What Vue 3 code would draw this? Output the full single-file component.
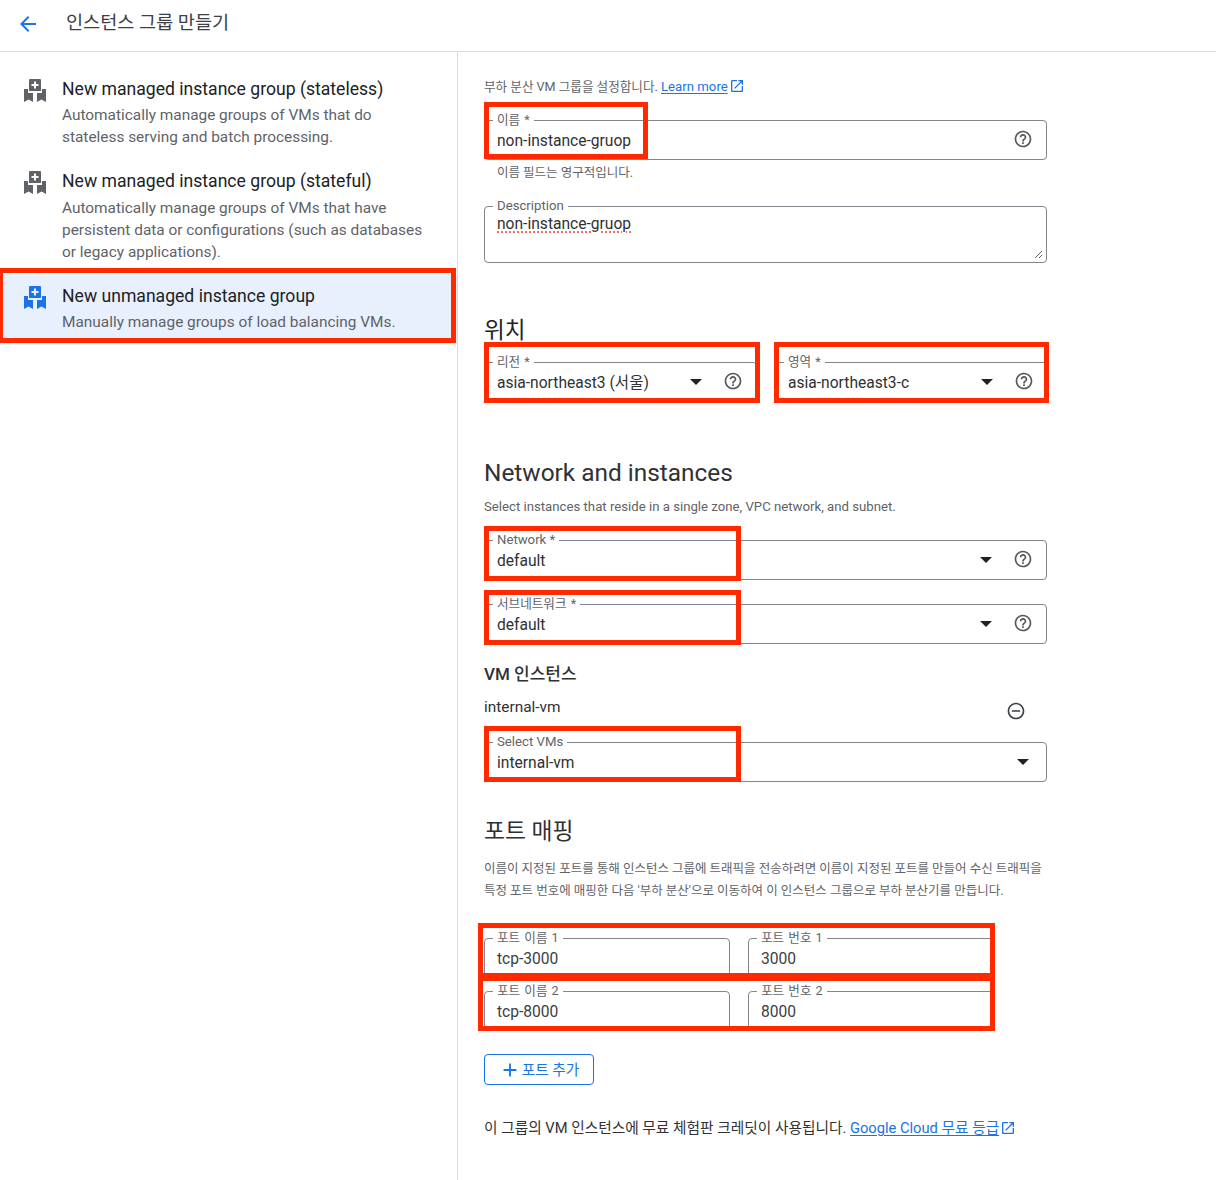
<template>
  <div class="page">
    <header class="topbar">
      <svg class="back" viewBox="0 0 24 24" width="24" height="24"><path d="M20 11H7.830l5.590-5.590L12 4l-8 8 8 8 1.410-1.410L7.830 13H20v-2z" /></svg>
      <h1>인스턴스 그룹 만들기</h1>
    </header>

    <div class="body">
      <nav class="sidebar">
        <div v-for="item in groupTypes" :key="item.title" class="type-item" :class="{ selected: item.selected }">
          <svg class="type-icon" viewBox="0 0 24 24" width="24" height="24">
            <path fill-rule="evenodd" d="M7 1h10a1 1 0 0 1 1 1v11H6V2a1 1 0 0 1 1-1zm4 2.500V6H8.500v2H11v2.500h2V8h2.500V6H13V3.500z" />
            <path d="M1 11h4v4h5v9l-4.500-2.500L1 24zM14 15h5v-4h4v13l-4.500-2.500L14 24z" />
          </svg>
          <div>
            <div class="type-title">{{ item.title }}</div>
            <div class="type-desc" v-html="item.desc"></div>
          </div>
        </div>
      </nav>

      <main class="form">
        <p class="intro">
          부하 분산 VM 그룹을 설정합니다.
          <a class="link">Learn more</a>
          <svg class="ext" viewBox="0 0 24 24" width="16" height="16"><path :d="extPath" /></svg>
        </p>

        <div class="field name-field">
          <label class="ko">이름 *</label>
          <span class="value">non-instance-gruop</span>
          <svg class="help" viewBox="0 0 24 24" width="20" height="20"><path :d="helpPath" /></svg>
        </div>
        <div class="hint">이름 필드는 영구적입니다.</div>

        <div class="field desc-field">
          <label>Description</label>
          <span class="value spell">non-instance-gruop</span>
          <svg class="grip" viewBox="0 0 10 10" width="10" height="10">
            <path d="M2 9L9 2M6 9L9 6" stroke="#5f6368" stroke-width="1" fill="none" />
          </svg>
        </div>

        <h2 class="loc-title">위치</h2>
        <div class="loc-row">
          <div class="field">
            <label class="ko">리전 *</label>
            <span class="value">asia-northeast3 (서울)</span>
            <svg class="drop" viewBox="0 0 12 6" width="12" height="6"><path d="M0 0h12L6 6z" /></svg>
            <svg class="help" viewBox="0 0 24 24" width="20" height="20"><path :d="helpPath" /></svg>
          </div>
          <div class="field">
            <label class="ko">영역 *</label>
            <span class="value">asia-northeast3-c</span>
            <svg class="drop" viewBox="0 0 12 6" width="12" height="6"><path d="M0 0h12L6 6z" /></svg>
            <svg class="help" viewBox="0 0 24 24" width="20" height="20"><path :d="helpPath" /></svg>
          </div>
        </div>

        <h2 class="net-title">Network and instances</h2>
        <p class="net-sub">Select instances that reside in a single zone, VPC network, and subnet.</p>
        <div class="field network">
          <label>Network *</label>
          <span class="value">default</span>
          <svg class="drop" viewBox="0 0 12 6" width="12" height="6"><path d="M0 0h12L6 6z" /></svg>
          <svg class="help" viewBox="0 0 24 24" width="20" height="20"><path :d="helpPath" /></svg>
        </div>
        <div class="field network">
          <label class="ko">서브네트워크 *</label>
          <span class="value">default</span>
          <svg class="drop" viewBox="0 0 12 6" width="12" height="6"><path d="M0 0h12L6 6z" /></svg>
          <svg class="help" viewBox="0 0 24 24" width="20" height="20"><path :d="helpPath" /></svg>
        </div>

        <h3>VM 인스턴스</h3>
        <div class="vm-row">
          <span>internal-vm</span>
          <svg class="minus" viewBox="0 0 24 24" width="20" height="20"><path d="M7 11v2h10v-2H7zm5-9C6.480 2 2 6.480 2 12s4.480 10 10 10 10-4.480 10-10S17.520 2 12 2zm0 18c-4.410 0-8-3.590-8-8s3.590-8 8-8 8 3.590 8 8-3.590 8-8 8z" /></svg>
        </div>
        <div class="field vm-select">
          <label>Select VMs</label>
          <span class="value">internal-vm</span>
          <svg class="drop" viewBox="0 0 12 6" width="12" height="6"><path d="M0 0h12L6 6z" /></svg>
        </div>

        <h2 class="port-title">포트 매핑</h2>
        <p class="port-desc">
          이름이 지정된 포트를 통해 인스턴스 그룹에 트래픽을 전송하려면 이름이 지정된 포트를 만들어 수신 트래픽을<br />
          특정 포트 번호에 매핑한 다음 '부하 분산'으로 이동하여 이 인스턴스 그룹으로 부하 분산기를 만듭니다.
        </p>
        <div class="ports">
          <template v-for="port in ports" :key="port.name">
            <div class="field">
              <label class="ko">{{ port.nameLabel }}</label>
              <span class="value">{{ port.name }}</span>
            </div>
            <div class="field">
              <label class="ko">{{ port.numLabel }}</label>
              <span class="value">{{ port.num }}</span>
            </div>
          </template>
        </div>

        <button class="add-port">
          <svg viewBox="0 0 24 24" width="22" height="22"><path d="M19 13h-6v6h-2v-6H5v-2h6V5h2v6h6v2z" /></svg>
          <span>포트 추가</span>
        </button>

        <p class="credit">
          이 그룹의 VM 인스턴스에 무료 체험판 크레딧이 사용됩니다.
          <a class="link">Google Cloud 무료 등급</a>
          <svg class="ext" viewBox="0 0 24 24" width="16" height="16"><path :d="extPath" /></svg>
        </p>
      </main>
    </div>

    <!-- red annotation boxes drawn on top of the screenshot -->
    <div
      v-for="(box, i) in marks"
      :key="i"
      class="mark"
      :style="{ left: box[0] + 'px', top: box[1] + 'px', width: box[2] + 'px', height: box[3] + 'px' }"
    ></div>
  </div>
</template>

<script setup>
const helpPath =
  "M11 18h2v-2h-2v2zm1-16C6.480 2 2 6.480 2 12s4.480 10 10 10 10-4.480 10-10S17.520 2 12 2zm0 18c-4.410 0-8-3.590-8-8s3.590-8 8-8 8 3.590 8 8-3.590 8-8 8zm0-14c-2.210 0-4 1.790-4 4h2c0-1.100.9-2 2-2s2 .9 2 2c0 2-3 1.750-3 5h2c0-2.250 3-2.500 3-5 0-2.210-1.790-4-4-4z";
const extPath =
  "M19 19H5V5h7V3H5c-1.110 0-2 .9-2 2v14c0 1.100.89 2 2 2h14c1.100 0 2-.9 2-2v-7h-2v7zM14 3v2h3.590l-9.830 9.830 1.410 1.410L19 6.410V10h2V3h-7z";

const groupTypes = [
  {
    title: "New managed instance group (stateless)",
    desc: "Automatically manage groups of VMs that do<br>stateless serving and batch processing.",
  },
  {
    title: "New managed instance group (stateful)",
    desc: "Automatically manage groups of VMs that have<br>persistent data or configurations (such as databases<br>or legacy applications).",
  },
  {
    title: "New unmanaged instance group",
    desc: "Manually manage groups of load balancing VMs.",
    selected: true,
  },
];

const ports = [
  { nameLabel: "포트 이름 1", name: "tcp-3000", numLabel: "포트 번호 1", num: "3000" },
  { nameLabel: "포트 이름 2", name: "tcp-8000", numLabel: "포트 번호 2", num: "8000" },
];

const marks = [
  [-2, 268, 458, 75],
  [484, 102, 164, 57],
  [484, 342, 276, 61],
  [774, 342, 275, 61],
  [484, 526, 257, 55],
  [484, 590, 257, 55],
  [484, 726, 257, 56],
  [478, 923, 517, 55],
  [478, 976, 517, 55],
];
</script>

<style>
html,
body {
  margin: 0;
  background: #fff;
}
</style>

<style scoped>
.page {
  position: relative;
  width: 1216px;
  height: 1180px;
  overflow: hidden;
  font-family: Roboto, "Noto Sans CJK KR", sans-serif;
  color: #202124;
}
.topbar {
  height: 51px;
  border-bottom: 1px solid #dadce0;
  display: flex;
  align-items: flex-start;
}
.back {
  fill: #1a73e8;
  margin: 12px 0 0 16px;
}
.topbar h1 {
  margin: 10px 0 0 26px;
  font-size: 18.600px;
  line-height: 26px;
  font-weight: 400;
  color: #3c4043;
}
.body {
  display: flex;
  height: 1128px;
}
.sidebar {
  width: 458px;
  box-sizing: border-box;
  border-right: 1px solid #dadce0;
  padding-top: 16px;
  flex-shrink: 0;
}
.type-item {
  display: flex;
  gap: 15px;
  padding: 9px 0 9px 23px;
  margin-bottom: 3px;
}
.type-icon {
  fill: #5f6368;
  flex-shrink: 0;
  margin-top: 1px;
}
.type-title {
  font-size: 17.600px;
  line-height: 24px;
  color: #202124;
}
.type-desc {
  margin-top: 3px;
  font-size: 15.400px;
  line-height: 22px;
  color: #5f6368;
}
.type-item:nth-child(2) .type-desc {
  margin-top: 4px;
}
.selected {
  background: #e8f0fe;
  margin-bottom: 0;
  padding-bottom: 11px;
}
.selected .type-icon {
  fill: #1a73e8;
}
.form {
  width: 563px;
  margin-left: 26px;
  padding-top: 25px;
}
p {
  margin: 0;
}
.intro {
  font-size: 12.600px;
  line-height: 20px;
  color: #5f6368;
}
.link {
  color: #1a73e8;
  text-decoration: underline;
  text-underline-offset: 2px;
}
.intro .link {
  font-size: 13.200px;
}
.ext {
  fill: #1a73e8;
  vertical-align: -3px;
  margin-left: 1px;
}
.field {
  position: relative;
  box-sizing: border-box;
  height: 40px;
  border: 1px solid #80868b;
  border-radius: 4px;
  background: #fff;
  display: flex;
  align-items: center;
  padding: 1px 12px 0;
}
.field label {
  position: absolute;
  left: 8px;
  top: -9px;
  padding: 0 4px;
  background: #fff;
  font-size: 13.200px;
  line-height: 16px;
  color: #5f6368;
}
.field label.ko {
  font-size: 12.600px;
  word-spacing: 1px;
}
.value {
  font-size: 15.600px;
  line-height: 20px;
  color: #303134;
}
.help {
  fill: #54585c;
  position: absolute;
  right: 13px;
  top: 8px;
}
.drop {
  fill: #202124;
  position: absolute;
  right: 54px;
  top: 16px;
}
.name-field {
  margin-top: 23px;
}
.hint {
  margin: 5px 0 0 13px;
  font-size: 12.500px;
  line-height: 16px;
  color: #5f6368;
}
.desc-field {
  margin-top: 25px;
  height: 57px;
  align-items: flex-start;
  padding-top: 7px;
}
.spell {
  text-decoration: underline dotted #ea4335;
  text-underline-offset: 3px;
}
.grip {
  position: absolute;
  right: 3px;
  bottom: 3px;
}
h2 {
  margin: 0;
  font-weight: 400;
  color: #202124;
}
.loc-title {
  margin-top: 51px;
  font-size: 22.500px;
  line-height: 32px;
}
.loc-row {
  margin-top: 16px;
  display: grid;
  grid-template-columns: 273px 273px;
  gap: 18px;
}
.net-title {
  margin-top: 55px;
  font-size: 24.400px;
  line-height: 32px;
  color: #303134;
}
.net-sub {
  margin-top: 8px;
  font-size: 13.200px;
  line-height: 20px;
  color: #5f6368;
}
.network {
  margin-top: 24px;
}
.net-sub + .network {
  margin-top: 23px;
}
h3 {
  margin: 18px 0 0;
  font-size: 17px;
  line-height: 24px;
  font-weight: 500;
  color: #303134;
}
.vm-row {
  margin-top: 11px;
  display: flex;
  justify-content: space-between;
  font-size: 15.400px;
  line-height: 20px;
  color: #303134;
}
.minus {
  fill: #3c4043;
  margin: 4px 21px -4px 0;
}
.vm-select {
  margin-top: 25px;
}
.vm-select .drop {
  right: 17px;
}
.port-title {
  margin-top: 34px;
  font-size: 22.800px;
  line-height: 32px;
  color: #303134;
}
.port-desc {
  margin-top: 10px;
  font-size: 12.500px;
  line-height: 22px;
  color: #5f6368;
}
.ports {
  margin-top: 36px;
  display: grid;
  grid-template-columns: 246px 246px;
  column-gap: 18px;
  row-gap: 13px;
}
.ports .value {
  color: #3c4043;
}
.add-port {
  margin-top: 23px;
  box-sizing: border-box;
  width: 110px;
  height: 31px;
  display: flex;
  align-items: center;
  justify-content: center;
  gap: 1px;
  background: #fff;
  border: 1px solid #1a73e8;
  border-radius: 4px;
  color: #1a73e8;
  font-family: inherit;
  font-size: 14.700px;
  padding: 0;
}
.add-port span {
  position: relative;
  top: -1px;
}
.add-port svg {
  fill: #1a73e8;
}
.credit {
  margin-top: 32px;
  font-size: 14.700px;
  line-height: 22px;
  color: #303134;
}
.mark {
  position: absolute;
  box-sizing: border-box;
  border: 5px solid #ff2a00;
  pointer-events: none;
}
</style>
